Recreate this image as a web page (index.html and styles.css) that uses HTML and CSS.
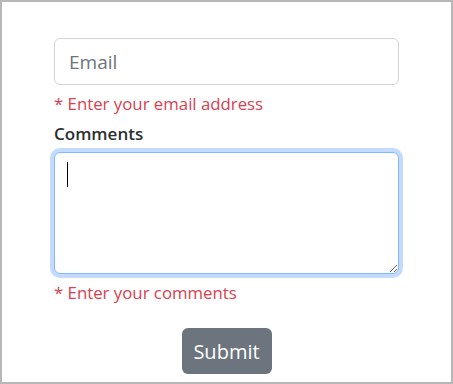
FILE: index.html
```
<!DOCTYPE html>
<html lang="en">
<head>
  <meta charset="UTF-8" />
  <meta name="viewport" content="width=device-width, initial-scale=1.0" />
  <title>Feedback</title>
  <link rel="stylesheet" href="styles.css">
</head>
<body>
  <div class="frame">
    <form class="form" onsubmit="return false">
      <input class="field" type="email" placeholder="Email" />
      <div class="error">* Enter your email address</div>

      <label class="label" for="comments">Comments</label>
      <div class="area-wrap">
        <textarea id="comments" class="field area focused"></textarea>
        <span class="caret"></span>
      </div>
      <div class="error">* Enter your comments</div>

      <button class="button" type="submit">Submit</button>
    </form>
  </div>
</body>
</html>
```

FILE: styles.css
```
body {
  margin: 0;
  font-family: 'Open Sans', 'Segoe UI', sans-serif;
  background: #fff;
}

.frame {
  width: 453px;
  height: 384px;
  box-sizing: border-box;
  border: 2px solid #b7b7b7;
  background: #fff;
}

.form {
  display: flex;
  flex-direction: column;
  align-items: flex-start;
  padding: 36px 0 0 52px;
}

.field {
  box-sizing: border-box;
  width: 345px;
  height: 47px;
  margin: 0;
  padding: 0 14px;
  border: 1px solid #ced4da;
  border-radius: 6px;
  font-family: inherit;
  font-size: 19px;
  color: #212529;
  background: #fff;
  outline: none;
}

.field::placeholder {
  color: #6c757d;
}

.error {
  margin-top: 7px;
  font-size: 16.8px;
  line-height: 24px;
  color: #d9404f;
}

.label {
  margin-top: 7px;
  font-size: 17px;
  line-height: 22px;
  font-weight: 600;
  color: #2b2f33;
}

.area-wrap {
  position: relative;
  margin-top: 7px;
}

.area {
  display: block;
  height: 122px;
  padding: 8px 14px;
  resize: vertical;
}

.area.focused {
  border-color: #86b7fe;
  box-shadow: 0 0 0 4px #c2dbfe;
}

.caret {
  position: absolute;
  left: 13px;
  top: 10px;
  width: 1px;
  height: 25px;
  background: #000;
}

.button {
  align-self: center;
  margin: 23px 0 0 -52px;
  width: 90px;
  height: 46px;
  border: none;
  border-radius: 6px;
  background-color: #6c757d;
  color: #fff;
  font-family: inherit;
  font-size: 20px;
  cursor: pointer;
}
```
